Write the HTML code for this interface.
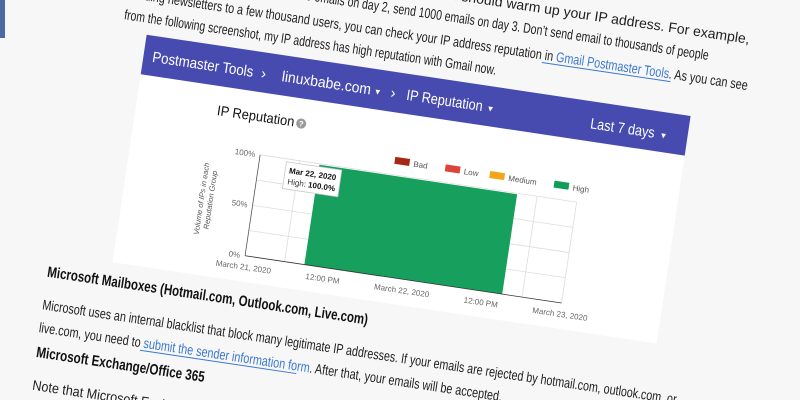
<!DOCTYPE html>
<html><head><meta charset="utf-8"><style>
html,body{margin:0;padding:0;background:#f7f7f7;width:800px;height:400px;overflow:hidden}
svg{display:block}
text{font-family:"Liberation Sans",sans-serif}
</style></head><body>
<svg width="800" height="400" viewBox="0 0 800 400" xmlns="http://www.w3.org/2000/svg">
<rect width="800" height="400" fill="#f7f7f7"/>
<rect x="0" y="0" width="5" height="38" fill="#4d67a6"/>
<g transform="rotate(8.5 400 200)">
 <g font-size="14" fill="#1e1e1e">
  <text x="100" y="-6" textLength="622" lengthAdjust="spacingAndGlyphs">If you use a new IP address for your mail server, you should warm up your IP address. For example,</text>
  <text x="100" y="16" textLength="584" lengthAdjust="spacingAndGlyphs">you can send 100 emails on day 1, 500 emails on day 2, send 1000 emails on day 3. Don’t send email to thousands of people</text>
  <text x="100" y="40" textLength="627" lengthAdjust="spacingAndGlyphs">sending newsletters to a few thousand users, you can check your IP address reputation in <tspan fill="#3a78d0">Gmail Postmaster Tools</tspan>. As you can see</text>
  <text x="100" y="62" textLength="376" lengthAdjust="spacingAndGlyphs">from the following screenshot, my IP address has high reputation with Gmail now.</text>
 </g>
 <line x1="520" y1="43" x2="650" y2="43" stroke="#3a78d0" stroke-width="1"/>
 <rect x="125" y="74" width="550" height="230" fill="#fff"/>
 <rect x="125" y="74" width="550" height="40" fill="#474aaf"/>
 <g fill="#fff" font-size="15">
  <text x="134" y="100" textLength="102" lengthAdjust="spacingAndGlyphs">Postmaster Tools</text>
  <text x="244" y="100">›</text>
  <text x="265" y="100" textLength="90" lengthAdjust="spacingAndGlyphs">linuxbabe.com</text>
  <text x="358" y="99" font-size="8">▼</text>
  <text x="375" y="100">›</text>
  <text x="391" y="100" textLength="77" lengthAdjust="spacingAndGlyphs">IP Reputation</text>
  <text x="472" y="99" font-size="8">▼</text>
  <text x="577" y="101" textLength="65" lengthAdjust="spacingAndGlyphs">Last 7 days</text>
  <text x="647" y="100" font-size="8">▼</text>
 </g>
 <text x="206" y="143" font-size="14" fill="#111" textLength="78" lengthAdjust="spacingAndGlyphs">IP Reputation</text>
 <circle cx="291" cy="139" r="5" fill="#9a9a9a"/>
 <text x="288.5" y="142" font-size="8" fill="#fff" font-weight="bold">?</text>
 <!-- legend -->
 <g font-size="8" fill="#555">
  <rect x="389" y="158" width="15" height="7" fill="#a52714"/><text x="408" y="165">Bad</text>
  <rect x="440" y="158" width="15" height="7" fill="#db4437"/><text x="459" y="165">Low</text>
  <rect x="485" y="158" width="15" height="7" fill="#f4a51c"/><text x="504" y="165">Medium</text>
  <rect x="550" y="158" width="15" height="7" fill="#0f9d58"/><text x="569" y="165">High</text>
 </g>
 <!-- plot -->
 <g stroke="#ddd" stroke-width="0.8">
  <line x1="255" y1="176" x2="575" y2="176"/><line x1="255" y1="201.5" x2="575" y2="201.5"/>
  <line x1="255" y1="227" x2="575" y2="227"/><line x1="255" y1="252.5" x2="575" y2="252.5"/>
  <line x1="295" y1="176" x2="295" y2="278"/><line x1="535" y1="176" x2="535" y2="278"/>
  <line x1="575" y1="176" x2="575" y2="278"/>
 </g>
 <rect x="315" y="177" width="200" height="101" fill="#17a05d"/>
 <line x1="255" y1="176" x2="255" y2="278" stroke="#555" stroke-width="0.8"/>
 <line x1="255" y1="278" x2="575" y2="278" stroke="#333" stroke-width="0.8"/>
 <g font-size="8" fill="#666">
  <text x="250" y="179" text-anchor="end">100%</text>
  <text x="250" y="230" text-anchor="end">50%</text>
  <text x="250" y="281" text-anchor="end">0%</text>
  <text x="255" y="292" text-anchor="middle">March 21, 2020</text>
  <text x="335" y="292" text-anchor="middle">12:00 PM</text>
  <text x="415" y="292" text-anchor="middle">March 22, 2020</text>
  <text x="495" y="292" text-anchor="middle">12:00 PM</text>
  <text x="575" y="292" text-anchor="middle">March 23, 2020</text>
 </g>
 <g font-size="7.5" fill="#555" font-style="italic" transform="rotate(-90 210 228)">
  <text x="210" y="224" text-anchor="middle">Volume of IPs in each</text>
  <text x="210" y="233" text-anchor="middle">Reputation Group</text>
 </g>
 <rect x="282" y="179" width="56" height="27" fill="#fff" stroke="#c8c8c8" stroke-width="0.8"/>
 <text x="286" y="190" font-size="8" font-weight="bold" fill="#111">Mar 22, 2020</text>
 <text x="286" y="201" font-size="8" fill="#333">High: <tspan font-weight="bold" fill="#111">100.0%</tspan></text>
 <!-- bottom -->
 <text x="62" y="328" font-size="15" font-weight="bold" fill="#111" textLength="324" lengthAdjust="spacingAndGlyphs">Microsoft Mailboxes (Hotmail.com, Outlook.com, Live.com)</text>
 <g font-size="14" fill="#1e1e1e">
  <text x="62" y="361" textLength="641" lengthAdjust="spacingAndGlyphs">Microsoft uses an internal blacklist that block many legitimate IP addresses. If your emails are rejected by hotmail.com, outlook.com, or</text>
  <text x="62" y="384" textLength="468" lengthAdjust="spacingAndGlyphs">live.com, you need to <tspan fill="#3a78d0">submit the sender information form</tspan>. After that, your emails will be accepted.</text>
  <text x="64" y="442" textLength="560" lengthAdjust="spacingAndGlyphs">Note that Microsoft Exchange and Office 365 also use Microsoft blacklists. Make sure your IP is fine.</text>
 </g>
 <line x1="165" y1="387" x2="323" y2="387" stroke="#3a78d0" stroke-width="1"/>
 <text x="63" y="409" font-size="15" font-weight="bold" fill="#111" textLength="170" lengthAdjust="spacingAndGlyphs">Microsoft Exchange/Office 365</text>
</g>
</svg>
</body></html>
